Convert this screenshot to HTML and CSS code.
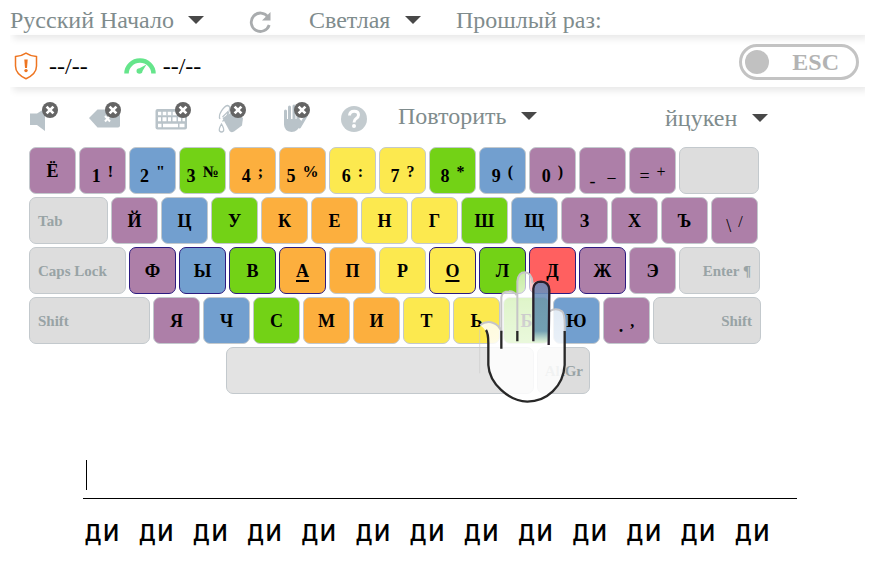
FILE: index.html
```
<!DOCTYPE html>
<html lang="ru">
<head>
<meta charset="utf-8">
<title>Клавиатурный тренажёр</title>
<link rel="stylesheet" href="styles.css">
</head>
<body>
<header>
  <div class="bar settings">
    <label class="picker course"><select aria-label="Курс"><option>Русский Начало</option></select><svg class="arrow" viewBox="0 0 16 8"><path d="M0 0h16L8 8z"/></svg></label>
    <button class="plain reload" aria-label="Заново"><svg width="24" height="24" viewBox="0 0 24 24"><path d="M19 7A9.200 9.200 0 1 0 20.200 15" fill="none" stroke="#a9acae" stroke-width="2.800"/><path d="M21.500 2v8.500h-8.500z" fill="#a9acae"/></svg></button>
    <label class="picker theme"><select aria-label="Тема"><option>Светлая</option></select><svg class="arrow" viewBox="0 0 16 8"><path d="M0 0h16L8 8z"/></svg></label>
    <span class="last">Прошлый раз:</span>
  </div>
  <div class="bar stats">
    <svg width="24" height="28" viewBox="0 0 24 28"><path d="M12 1.200C9 3.300 5.500 4.300 1.500 4.600V14c0 6 4.500 10 10.500 12.700C18 24 22.500 20 22.500 14V4.600C18.500 4.300 15 3.300 12 1.200z" fill="none" stroke="#ee7521" stroke-width="1.500"/><path d="M10.300 7.500h3.400l-.7 8.500h-2z" fill="#ee7521"/><circle cx="12" cy="18.600" r="1.700" fill="#ee7521"/></svg>
    <span class="score">--/--</span>
    <svg class="gauge" width="32" height="16" viewBox="0 0 32 16"><path d="M2.500 15.500a13.500 13 0 0 1 27 0" fill="none" stroke="#65e58b" stroke-width="4.500"/><path d="M22.500 6.500l-4 6.500a3 2.800 0 1 1-3-2.800z" fill="#65e58b"/></svg>
    <span class="score">--/--</span>
    <label class="toggle"><input type="checkbox"><span class="knob"></span>ESC</label>
  </div>
</header>

<svg class="defs" width="0" height="0" aria-hidden="true">
  <symbol id="off" viewBox="0 0 16 16"><circle cx="8" cy="8" r="8" fill="#656565"/><path d="M4.600 4.600l6.800 6.800M11.400 4.600l-6.800 6.800" stroke="#fff" stroke-width="2.700"/></symbol>
</svg>

<nav class="tools">
  <button class="plain" aria-label="Звук"><svg width="32" height="32" viewBox="0 0 32 32"><path d="M2 11.500h7l8-5v22.500l-8-6H2z" fill="#b9c3c9"/><use href="#off" x="14" y="0" width="16" height="16"/></svg></button>
  <button class="plain erase" aria-label="Стирание"><svg width="34" height="32" viewBox="0 0 34 32"><path d="M1 16l8.500-8.500h19.500q3 0 3 3v13q0 2-2 2H9.500z" fill="#b9c3c9"/><path d="M17 14l5 5.500M22 14l-5 5.500" stroke="#fff" stroke-width="2"/><use href="#off" x="17" y="0" width="16" height="16"/></svg></button>
  <button class="plain keys" aria-label="Клавиатура"><svg width="38" height="32" viewBox="0 0 38 32"><rect x="1.500" y="7" width="31.500" height="20.500" rx="2" fill="#b9c3c9"/><path d="M4 11.500h26M4 23.500h3.500M9 23.500h15M25.500 23.500h5" stroke="#fff" stroke-width="3.600" stroke-dasharray="15 0"/><path d="M4 17.300h27" stroke="#fff" stroke-width="4" stroke-dasharray="3 1.500 4 1.500"/><path d="M8 9v4.500M13 9v4.500M18 9v4.500" stroke="#b9c3c9" stroke-width="1.400"/><use href="#off" x="21" y="0" width="16" height="16"/></svg></button>
  <button class="plain paint" aria-label="Раскраска"><svg width="32" height="32" viewBox="0 0 32 32"><path d="M6.500 16L18 9l9 7-1 7.500-8 6q-3 1.500-4.500-.5z" fill="#b9c3c9"/><path d="M4 17C1.500 13 8 4 11.500 3.500q3.500.5 1.500 6-3 7-6.500 10" fill="none" stroke="#b9c3c9" stroke-width="1.300"/><path d="M6.500 15l5-5 1 6" fill="none" stroke="#b9c3c9" stroke-width="1.200"/><path d="M5.500 22q-3 5-2 7 2 2 4 0 1-2-2-7z" fill="none" stroke="#b9c3c9" stroke-width="1.300"/><use href="#off" x="14" y="0" width="16" height="16"/></svg></button>
  <button class="plain hands" aria-label="Руки"><svg width="32" height="32" viewBox="0 0 32 32"><g fill="none" stroke="#b9c3c9" stroke-width="3" stroke-linecap="round"><path d="M5.500 9v13M9.500 5v15M14 4v15M18 7v14"/><path d="M26 14l-6.500 11"/></g><path d="M4 17h15.500l3 3Q18 30 11.500 30 4 29 4 22z" fill="#b9c3c9"/><use href="#off" x="14" y="0" width="16" height="16"/></svg></button>
  <button class="plain help" aria-label="Помощь"><svg width="28" height="32" viewBox="0 0 28 32"><circle cx="14" cy="17" r="13" fill="#c3cbcf"/><path d="M9.500 13.500q.3-4.200 4.700-4.200 4.300 0 4.300 3.700 0 2-2.300 3.600Q14 18 14 20.500" fill="none" stroke="#fff" stroke-width="3"/><circle cx="14" cy="24" r="2" fill="#fff"/></svg></button>
  <label class="picker repeat"><select aria-label="Режим"><option>Повторить</option></select><svg class="arrow" viewBox="0 0 16 8"><path d="M0 0h16L8 8z"/></svg></label>
  <label class="picker layout"><select aria-label="Раскладка"><option>йцукен</option></select><svg class="arrow" viewBox="0 0 16 8"><path d="M0 0h16L8 8z"/></svg></label>
</nav>

<main>
  <section class="keyboard" aria-label="Клавиатура">
    <div class="row">
      <button class="key purple">Ё</button>
      <button class="key pair purple"><span>1</span><sup>!</sup></button>
      <button class="key pair blue"><span>2</span><sup>"</sup></button>
      <button class="key pair green"><span>3</span><sup>№</sup></button>
      <button class="key pair orange"><span>4</span><sup>;</sup></button>
      <button class="key pair orange"><span>5</span><sup>%</sup></button>
      <button class="key pair yellow"><span>6</span><sup>:</sup></button>
      <button class="key pair yellow"><span>7</span><sup>?</sup></button>
      <button class="key pair green"><span>8</span><sup>*</sup></button>
      <button class="key pair blue"><span>9</span><sup>(</sup></button>
      <button class="key pair purple"><span>0</span><sup>)</sup></button>
      <button class="key pair thin dash purple"><span>-</span><sup>_</sup></button>
      <button class="key pair thin purple"><span>=</span><sup>+</sup></button>
      <button class="key service backspace" aria-label="Backspace"></button>
    </div>
    <div class="row">
      <button class="key service tab">Tab</button>
      <button class="key purple">Й</button>
      <button class="key blue">Ц</button>
      <button class="key green">У</button>
      <button class="key orange">К</button>
      <button class="key orange">Е</button>
      <button class="key yellow">Н</button>
      <button class="key yellow">Г</button>
      <button class="key green">Ш</button>
      <button class="key blue">Щ</button>
      <button class="key purple">З</button>
      <button class="key purple">Х</button>
      <button class="key purple">Ъ</button>
      <button class="key pair thin purple"><span>\</span><sup>/</sup></button>
    </div>
    <div class="row">
      <button class="key service caps">Caps Lock</button>
      <button class="key home purple">Ф</button>
      <button class="key home blue">Ы</button>
      <button class="key home green">В</button>
      <button class="key home orange"><u>А</u></button>
      <button class="key orange">П</button>
      <button class="key yellow">Р</button>
      <button class="key home yellow"><u>О</u></button>
      <button class="key home green">Л</button>
      <button class="key home red">Д</button>
      <button class="key home purple">Ж</button>
      <button class="key purple">Э</button>
      <button class="key service enter">Enter ¶</button>
    </div>
    <div class="row">
      <button class="key service shift">Shift</button>
      <button class="key purple">Я</button>
      <button class="key blue">Ч</button>
      <button class="key green">С</button>
      <button class="key orange">М</button>
      <button class="key orange">И</button>
      <button class="key yellow">Т</button>
      <button class="key yellow">Ь</button>
      <button class="key green">Б</button>
      <button class="key blue">Ю</button>
      <button class="key pair purple"><span>.</span><sup>,</sup></button>
      <button class="key service shift-right">Shift</button>
    </div>
    <div class="row bottom">
      <button class="key service space" aria-label="Пробел"></button>
      <button class="key service altgr">AltGr</button>
    </div>
    <svg class="hand" width="90" height="135" viewBox="54 60 270 405" aria-hidden="true">
      <defs>
        <linearGradient id="palm" gradientUnits="userSpaceOnUse" x1="0" y1="60" x2="0" y2="300"><stop offset="0" stop-color="#fff" stop-opacity=".6"/><stop offset=".4" stop-color="#fff" stop-opacity=".78"/><stop offset="1" stop-color="#fff" stop-opacity=".86"/></linearGradient>
        <linearGradient id="tip" gradientUnits="userSpaceOnUse" x1="0" y1="95" x2="0" y2="280"><stop offset="0" stop-color="#2b5a9c" stop-opacity=".62"/><stop offset=".8" stop-color="#2b6a9c" stop-opacity=".62"/><stop offset="1" stop-color="#2b7a9c" stop-opacity="0"/></linearGradient>
      </defs>
      <path d="M60 225Q88 206 114 228L124 242V142Q126 124 147 124 162 123 172 136V94Q175 67 195 67 216 68 218 100 225 93 243 94 267 96 268 120V184Q288 172 306 184 316 192 314 245V345C310 410 260 455 202 455 145 453 88 400 85 350V262Q80 240 60 225z" fill="url(#palm)"/>
      <path d="M220 272V116Q222 95 243 95 267 96 268 120V280H220z" fill="url(#tip)"/>
      <g fill="none" stroke-linecap="butt">
        <path d="M60 225Q88 206 114 228L124 242V142Q126 124 147 124 162 123 170 136M172 245V94Q175 67 195 67 216 68 218 100M268 184Q288 172 306 184 316 192 314 245" stroke="#c6c5c7" stroke-width="6"/>
        <path d="M220 274V116Q222 95 243 95 267 96 268 120L266 285" stroke="#281f2b" stroke-width="7"/>
        <path d="M124 242V296M172 243V274M78 240Q85 250 85 280V345C88 400 145 453 202 455 260 455 310 410 314 345V243" stroke="#282828" stroke-width="7"/>
        <path d="M59 238V370" stroke="#ccc" stroke-width="2"/>
      </g>
    </svg>
  </section>

  <section class="typing">
    <div class="entry"><span class="caret"></span><input type="text" aria-label="Ввод текста"></div>
    <p class="words">ди ди ди ди ди ди ди ди ди ди ди ди ди</p>
  </section>
</main>
</body>
</html>
```
FILE: styles.css
```
* { box-sizing: border-box; }

body {
  margin: 0 26px 0 10px;
  background: #fff;
  font-family: "Liberation Serif", serif;
  font-size: 24px;
  line-height: 28px;
  color: #7f8c8d;
}

button, select, input { font: inherit; color: inherit; }

.defs { display: block; }

.bar {
  display: flex;
  align-items: center;
  box-shadow: 3px 4px 7px rgba(0, 0, 0, 0.09);
}

.settings { height: 35px; padding-top: 4px; }
.stats { height: 52px; padding: 10px 6px 0 4px; }

.picker { display: flex; align-items: center; gap: 14px; }

.picker select {
  appearance: none;
  border: 0;
  padding: 0;
  background: none;
}

.arrow { width: 16px; height: 8px; fill: #484848; }

.plain {
  display: flex;
  border: 0;
  padding: 0;
  background: none;
}

.reload { margin: 4px 36px 0 45px; }
.last { margin-left: 35px; }

.score { color: #000; margin-left: 11px; }
.gauge { margin-left: 36px; }
.gauge + .score { margin-left: 7px; }

.toggle {
  display: flex;
  align-items: center;
  width: 120px;
  height: 36px;
  margin: -8px 0 0 auto;
  padding: 0 17px 0 3px;
  justify-content: space-between;
  border: 3px solid #c3c3c3;
  border-radius: 18px;
  font-weight: bold;
  color: #b3b3b3;
}

.toggle input { appearance: none; position: absolute; margin: 0; }

.knob {
  width: 24px;
  height: 24px;
  border-radius: 50%;
  background: #c1c1c1;
}

.tools {
  display: flex;
  align-items: flex-start;
  padding: 15px 0 0 18px;
}

.erase { margin-left: 28px; }
.keys { margin-left: 32px; }
.paint { margin-left: 24px; }
.hands { margin-left: 32px; }
.help { margin-left: 28px; }
.repeat { margin-left: 30px; }
.layout { margin: 2px 97px 0 auto; }

.keyboard {
  position: relative;
  display: grid;
  gap: 3px;
  margin: 13px 0 0 19px;
  width: max-content;
}

.row { display: flex; gap: 3px; }
.bottom { margin-left: 197px; }

.key {
  display: flex;
  align-items: center;
  justify-content: center;
  width: 47px;
  height: 47px;
  padding: 0;
  border: 1px solid #c3c9cd;
  border-radius: 7px;
  font-size: 18px;
  line-height: 20px;
  font-weight: bold;
  color: #000;
}

.purple { background: #ad7fa8; }
.blue { background: #729fcf; }
.green { background: #73d216; }
.orange { background: #fcaf3e; }
.yellow { background: #fce94f; }
.red { background: #ff6060; }
.home { border-color: #2b1a80; }

.key u { text-underline-offset: 3px; text-decoration-thickness: 2px; }

.pair { gap: 7px; padding-top: 10px; }
.pair sup { font-size: 16px; line-height: 20px; padding-bottom: 8px; }
.thin { font-weight: normal; }
.dash { gap: 12px; }
.dash span { padding-top: 10px; }

.service {
  justify-content: flex-start;
  padding: 0 8px;
  background: #ddd;
  font-size: 15px;
  color: #98a3a5;
}

.backspace { width: 80px; }
.tab { width: 79px; }
.caps { width: 97px; }
.enter { width: 81px; justify-content: flex-end; }
.shift { width: 121px; }
.shift-right { width: 108px; justify-content: flex-end; }
.space { width: 308px; background: #e3e3e3; }
.altgr { width: 53px; justify-content: flex-end; padding: 0 6px; }

.hand {
  position: absolute;
  left: 449px;
  top: 123px;
}

.typing { margin: 62px 68px 0 73px; color: #000; }

.entry {
  display: flex;
  align-items: center;
  height: 43px;
  padding: 0 3px 5px;
  border-bottom: 1px solid #000;
}

.caret { width: 1px; height: 30px; background: #000; }

.entry input {
  flex: 1;
  min-width: 0;
  border: 0;
  padding: 0;
  outline: 0;
  background: none;
}

.words {
  margin: 13px 0 0 1px;
  font-family: "DejaVu Sans Mono", monospace;
  font-size: 30px;
  line-height: 38px;
}
```
